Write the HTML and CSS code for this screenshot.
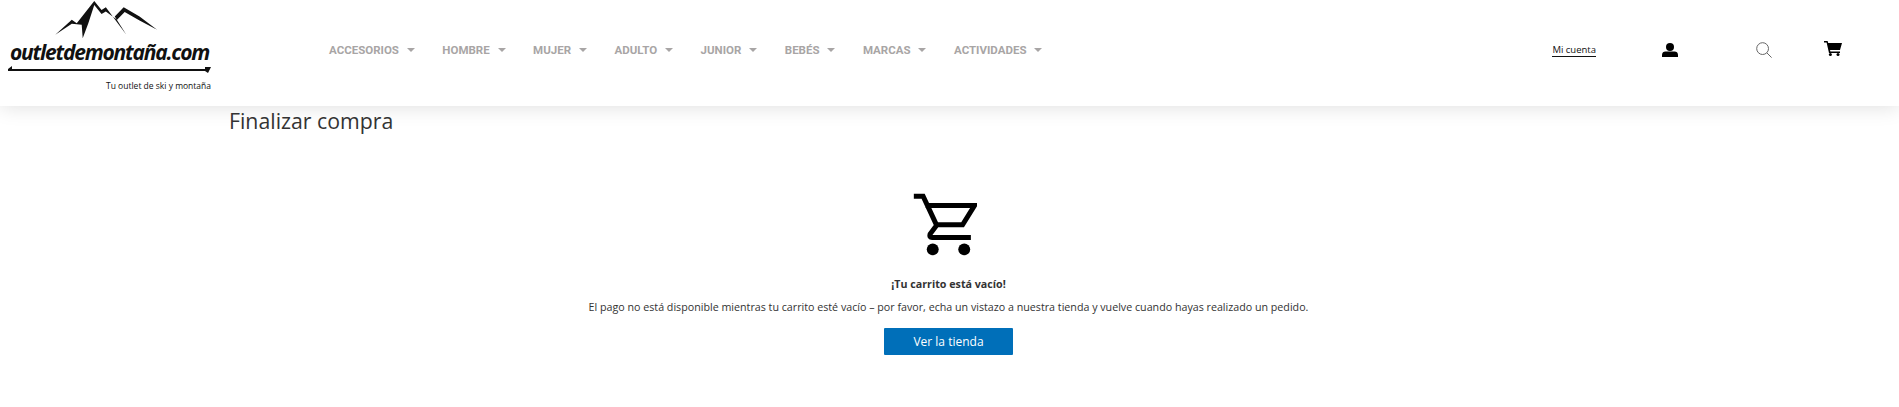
FILE: index.html
```html
<!DOCTYPE html>
<html lang="es">
<head>
    <meta charset="UTF-8">
    <title>Finalizar compra</title>
    <link rel="stylesheet" href="styles.css">
</head>
<body>
    <header class="site-header">
        <a class="logo" href="#">
            <svg class="logo-mountains" viewBox="165 0 310 118" width="103" height="39">
                <polygon points="165,105 215,60 230,70 283,3 305,30 318,22 380,105 345,50 372,22 420,50 473,90 420,62 375,36 352,60 318,35 305,42 283,15 265,70 248,116 245,75 215,72"/>
            </svg>
            <span class="logo-name">outletdemontaña.com</span>
            <svg class="logo-line" viewBox="0 0 203 7" width="203" height="7">
                <polygon points="0,3 4,0 4,3 197,3 197,1 203,1 200,7 197,5 0,5"/>
            </svg>
            <span class="logo-tag">Tu outlet de ski y montaña</span>
        </a>
        <nav class="main-nav">
            <a href="#">ACCESORIOS <i class="caret"></i></a>
            <a href="#">HOMBRE <i class="caret"></i></a>
            <a href="#">MUJER <i class="caret"></i></a>
            <a href="#">ADULTO <i class="caret"></i></a>
            <a href="#">JUNIOR <i class="caret"></i></a>
            <a href="#">BEBÉS <i class="caret"></i></a>
            <a href="#">MARCAS <i class="caret"></i></a>
            <a href="#">ACTIVIDADES <i class="caret"></i></a>
        </nav>
        <div class="header-tools">
            <a class="account-link" href="#">Mi cuenta</a>
            <svg class="icon-user" viewBox="0 0 16 14" width="16" height="14">
                <circle cx="8" cy="4" r="4"/>
                <path d="M0 14v-2.2C0 9.6 1.6 8.4 3.4 8.4h9.2c1.8 0 3.4 1.2 3.4 3.4V14z"/>
            </svg>
            <svg class="icon-search" viewBox="0 0 16 16" width="16" height="16">
                <circle cx="6.6" cy="6.6" r="5.9"/>
                <path d="M10.8 10.8l4.8 4.8"/>
            </svg>
            <svg class="icon-cart" viewBox="0 0 18 15" width="18" height="15">
                <path d="M0 0h3.6l.6 2H18l-2 7H6l.4 1.6h9.6v1.4H5L2.6 1.4H0z"/>
                <circle cx="6.4" cy="13.5" r="1.5"/>
                <circle cx="14" cy="13.5" r="1.5"/>
            </svg>
        </div>
    </header>
    <main class="checkout">
        <h1>Finalizar compra</h1>
        <div class="empty-cart">
            <svg class="empty-icon" viewBox="95 40 195 190" width="65" height="63">
                <path d="M100 50h28l42 90M135 78h148l-36 58H170l-21 28q-3 10 6 10h117"/>
                <circle cx="157" cy="210" r="18"/>
                <circle cx="252" cy="210" r="18"/>
            </svg>
            <p class="empty-title">¡Tu carrito está vacío!</p>
            <p class="empty-text">El pago no está disponible mientras tu carrito esté vacío – por favor, echa un vistazo a nuestra tienda y vuelve cuando hayas realizado un pedido.</p>
            <a class="shop-button" href="#">Ver la tienda</a>
        </div>
    </main>
</body>
</html>
```

FILE: styles.css
```css
body {
    margin: 0;
    font-family: "Open Sans", "Noto Sans", sans-serif;
    color: #333;
    background-color: white;
}
a {
    text-decoration: none;
    color: inherit;
}
.site-header {
    display: flex;
    align-items: center;
    height: 106px;
    background-color: white;
    box-shadow: 0 0 20px rgba(0,0,0,0.14);
}
.logo {
    display: flex;
    flex-direction: column;
    align-self: flex-start;
    width: 216px;
    height: 106px;
    margin-left: 8px;
    flex-shrink: 0;
    color: #111;
}
.logo-mountains {
    margin-left: 47px;
    fill: #111;
}
.logo-name {
    margin-left: 2px;
    font-family: "Open Sans", sans-serif;
    font-size: 21px;
    line-height: 26px;
    font-weight: 700;
    font-style: italic;
    letter-spacing: -1.2px;
    white-space: nowrap;
}
.logo-line {
    margin-top: 1px;
    fill: #111;
}
.logo-tag {
    margin-top: 6px;
    margin-left: 98px;
    font-size: 8.5px;
    line-height: 14px;
    white-space: nowrap;
}
.main-nav {
    display: flex;
    gap: 27.6px;
    margin-left: 105px;
    font-family: Roboto, sans-serif;
    font-size: 11.5px;
    font-weight: 700;
    color: #a8a5a5;
    transform: translateY(-3px);
}
.main-nav a {
    white-space: nowrap;
}
.caret {
    display: inline-block;
    width: 0;
    height: 0;
    margin-left: 5px;
    vertical-align: 2px;
    border-left: 4px solid transparent;
    border-right: 4px solid transparent;
    border-top: 4px solid #a8a5a5;
}
.header-tools {
    display: flex;
    align-items: center;
    margin-left: auto;
    margin-right: 57px;
    transform: translateY(-3px);
}
.account-link {
    margin-right: 66px;
    font-size: 9.5px;
    font-weight: 400;
    color: #111;
    border-bottom: 1px solid #111;
    line-height: 12px;
}
.icon-user {
    fill: black;
    margin-right: 78px;
}
.icon-search {
    fill: none;
    stroke: #666;
    stroke-width: 1;
    margin-right: 52px;
}
.icon-cart {
    fill: black;
    margin-top: -4px;
}
.checkout {
    padding: 0 229px;
}
h1 {
    margin: 0;
    padding-top: 2px;
    font-size: 21.3px;
    line-height: 26px;
    font-weight: 400;
    color: #333;
}
.empty-cart {
    display: flex;
    flex-direction: column;
    align-items: center;
    margin-top: 59px;
    transform: translateX(-1px);
}
.empty-icon {
    fill: black;
    margin-right: 8px;
}
.empty-icon path {
    fill: none;
    stroke: black;
    stroke-width: 15;
}
.empty-title {
    margin: 20px 0 0;
    font-size: 10.7px;
    line-height: 16px;
    font-weight: 700;
}
.empty-text {
    margin: 7px 0 0;
    font-size: 10.7px;
    line-height: 16px;
    white-space: nowrap;
}
.shop-button {
    display: block;
    width: 129px;
    margin-top: 13px;
    padding: 5px 0;
    font-size: 12px;
    line-height: 17px;
    text-align: center;
    color: white;
    background-color: #006fb9;
    border-radius: 1px;
}
```
